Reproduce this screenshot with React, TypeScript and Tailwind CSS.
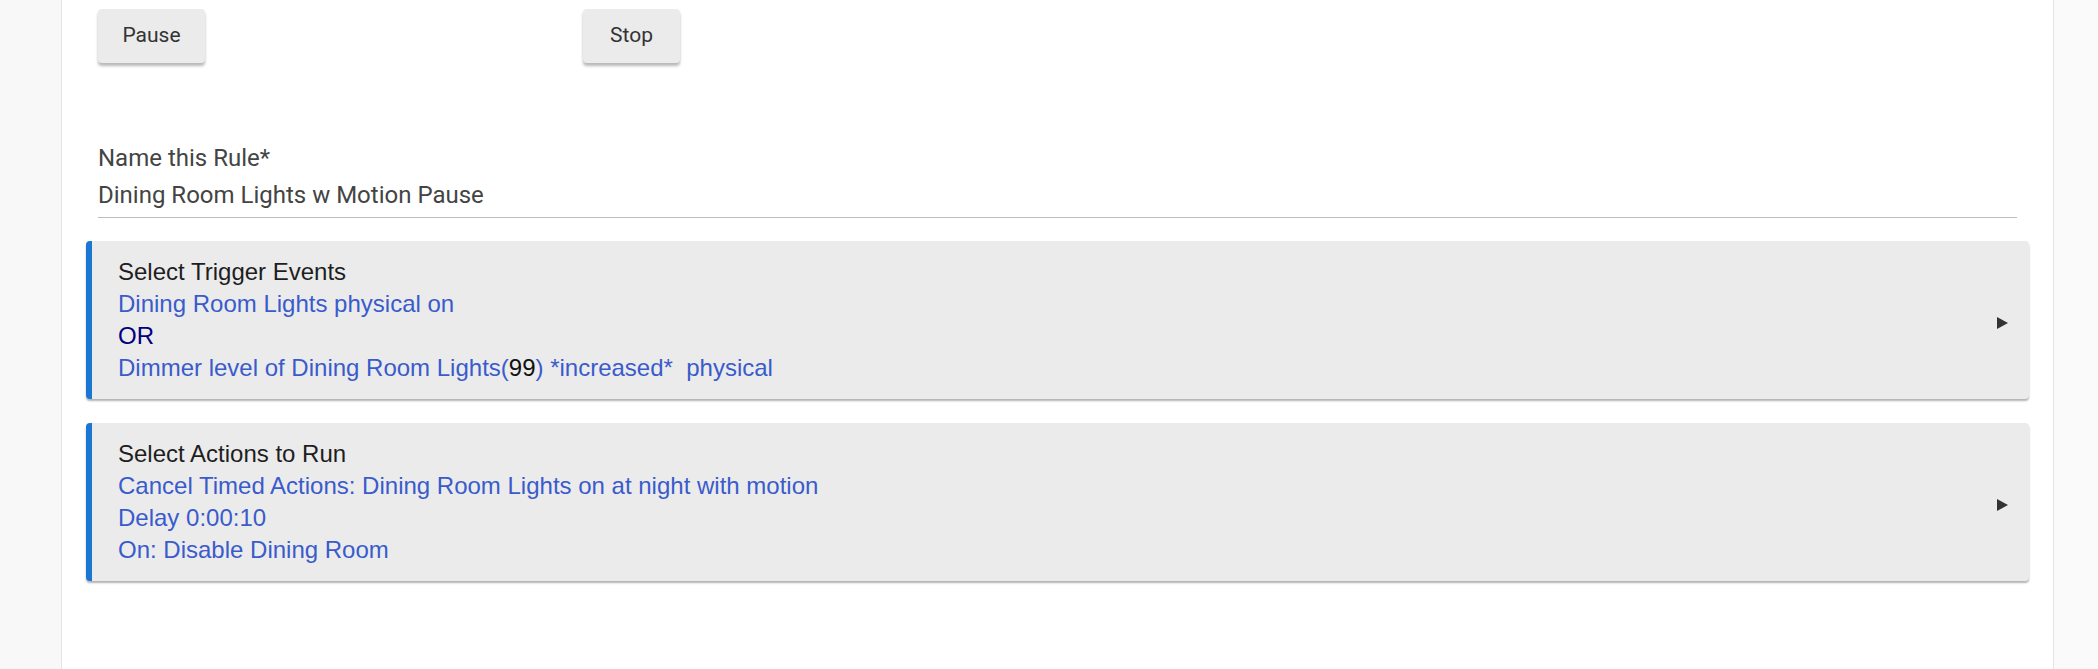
import type { ReactNode } from 'react'

const roboto = { fontFamily: 'Roboto, "Liberation Sans", sans-serif' }
const arial = { fontFamily: '"Liberation Sans", Arial, sans-serif' }

function Button({ children, width }: { children: ReactNode; width: string }) {
  return (
    <button
      style={roboto}
      className={`h-[54px] ${width} rounded-[4px] bg-[#ebebeb] text-[21px] text-[#333] shadow-[0_3px_3px_rgba(0,0,0,0.28)]`}
    >
      {children}
    </button>
  )
}

function Section({ title, children }: { title: string; children: ReactNode }) {
  return (
    <div
      style={arial}
      className="-mx-[12px] flex items-center rounded-[4px] border-l-[6px] border-[#1976d2] bg-[#ebebeb] py-[15px] pl-[26px] pr-[21px] text-[24px] leading-[32px] shadow-[0_2px_2px_rgba(0,0,0,0.3)]"
    >
      <div className="flex-1">
        <div className="text-[#1e1e1e]">{title}</div>
        {children}
      </div>
      <svg width="11" height="12" viewBox="0 0 11 12" className="mt-[6px]">
        <path d="M0 0 L11 6 L0 12 Z" fill="#333" />
      </svg>
    </div>
  )
}

const blue = 'text-[#3a5bcc]'

export default function App() {
  return (
    <div className="flex h-[669px] w-[2098px] overflow-hidden bg-[#fafafa]">
      <div className="w-[61px] shrink-0 bg-[#f8f8f8]" />
      <div className="w-[1993px] shrink-0 border-x border-[#e4e4e4] bg-white px-[36px]">
        <div className="flex pt-[9px]">
          <Button width="w-[107px]">Pause</Button>
          <div className="ml-[378px]">
            <Button width="w-[97px]">Stop</Button>
          </div>
        </div>

        <div style={roboto} className="mt-[77px] border-b-[1.5px] border-[#bdbdbd] pb-[3px] text-[24px] leading-[37px] text-[#444]">
          <div>Name this Rule*</div>
          <div>Dining Room Lights w Motion Pause</div>
        </div>

        <div className="mt-[23px] flex flex-col gap-[24px]">
          <Section title="Select Trigger Events">
            <div className={blue}>Dining Room Lights physical on</div>
            <div className="text-[#000080]">OR</div>
            <div className={`${blue} whitespace-pre`}>
              Dimmer level of Dining Room Lights(<span className="text-[#111]">99</span>) *increased*  physical
            </div>
          </Section>
          <Section title="Select Actions to Run">
            <div className={blue}>Cancel Timed Actions: Dining Room Lights on at night with motion</div>
            <div className={blue}>Delay 0:00:10</div>
            <div className={blue}>On: Disable Dining Room</div>
          </Section>
        </div>
      </div>
      <div className="flex-1" />
    </div>
  )
}
